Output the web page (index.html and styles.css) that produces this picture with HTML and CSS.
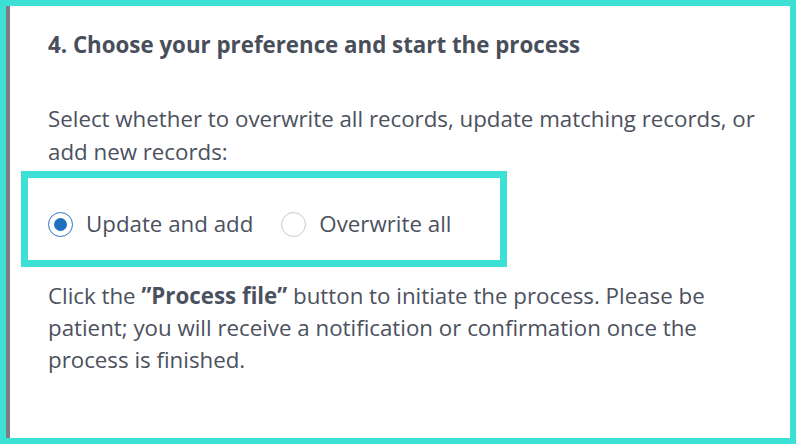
FILE: index.html
```html
<!DOCTYPE html>
<html>
<head>
	<meta charset="utf-8">
	<title>Import - step 4</title>
	<link rel="stylesheet" href="styles.css">
</head>
<body>

<div class="frame">
	<div class="panel">
		<h2 class="step-title">4. Choose your preference and start the process</h2>

		<p class="step-text">Select whether to overwrite all records, update matching records, or add new records:</p>

		<!-- Highlighted choice -->
		<div class="choice-box">
			<label class="choice">
				<input type="radio" name="mode" class="radio" checked>
				<span>Update and add</span>
			</label>
			<label class="choice">
				<input type="radio" name="mode" class="radio">
				<span>Overwrite all</span>
			</label>
		</div>

		<p class="step-text">Click the <b>”Process file”</b> button to initiate the process. Please be patient; you will receive a notification or confirmation once the process is finished.</p>
	</div>
</div>

</body>
</html>
```

FILE: styles.css
```css
* {
	box-sizing: border-box
}

html, body {
	margin: 0;
	height: 100%;
}

body {
	font-family: "Open Sans", "Liberation Sans", sans-serif;
	font-size: 22.3px;
	color: #4b515d;
	background: #3ce0d5;
}

.frame {
	height: 100%;
	border: 6px solid #3ce0d5;
}

.panel {
	height: 100%;
	background: white;
	border-left: 4px solid #7e7e80;
	padding: 24px 20px 0 38px;
}

.step-title {
	margin: 0;
	font-size: 22.3px;
	line-height: 30px;
	font-weight: 700;
	color: #484e5a;
}

.step-text {
	margin: 42px 0 0 0;
	line-height: 33px;
}

.step-text + .choice-box {
	margin-top: 3px;
}

.choice-box + .step-text {
	margin-top: 13px;
	line-height: 32px;
}

/* The highlight round the options */
.choice-box {
	display: flex;
	align-items: center;
	gap: 28px;
	width: 486px;
	height: 96px;
	margin-left: -27px;
	padding: 10px 0 0 20px;
	border: 7px solid #3ce0d5;
}

.choice {
	display: flex;
	align-items: center;
	gap: 13px;
	line-height: 30px;
	cursor: pointer;
}

.radio {
	appearance: none;
	-webkit-appearance: none;
	margin: 0;
	width: 25px;
	height: 25px;
	border: 1px solid #c9c9c9;
	border-radius: 50%;
	background: white;
	display: grid;
	place-items: center;
}

.radio:checked {
	border-color: #2b76c6;
}

.radio:checked::after {
	content: "";
	width: 13px;
	height: 13px;
	border-radius: 50%;
	background: #2070c0;
}
```
